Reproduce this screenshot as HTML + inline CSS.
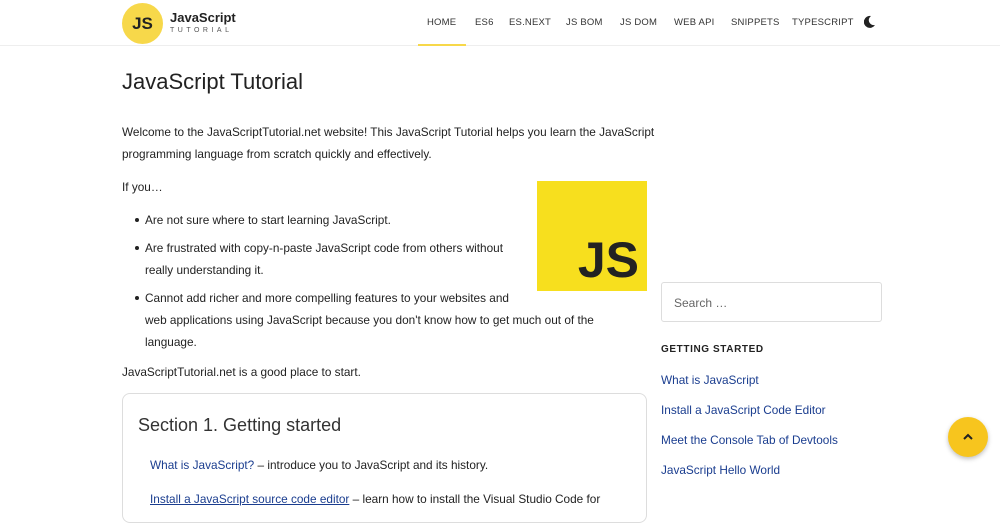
<!DOCTYPE html>
<html><head><meta charset="utf-8"><style>
*{margin:0;padding:0;box-sizing:border-box}
body{width:1000px;height:500px;overflow:hidden;background:#fff;font-family:"Liberation Sans",sans-serif;color:#222;position:relative}
.hdr{position:absolute;left:0;top:0;width:1000px;height:46px;border-bottom:1px solid #eee}
.logo{position:absolute;left:122px;top:3px;width:41px;height:41px;border-radius:50%;background:#f7d84a;font-weight:bold;font-size:17px;line-height:41px;text-align:center;color:#222}
.lt{position:absolute;left:170px;top:10px;font-weight:bold;font-size:13px;color:#222}
.ls{position:absolute;left:170px;top:27px;font-size:7px;letter-spacing:3.5px;color:#555}
.nav{position:absolute;top:17px;font-size:9.5px;color:#333;letter-spacing:.2px}
.ul{position:absolute;left:418px;top:44px;width:48px;height:2px;background:#f7d84a}
h1{position:absolute;left:122px;top:69px;font-weight:normal;font-size:22px;color:#222}
p,li{font-size:11.8px;line-height:22px;color:#222;white-space:nowrap}
.a{position:absolute;left:122px}
ul{position:absolute;left:145px;list-style:none}
li{position:relative;margin-bottom:6px}
li:before{content:"";position:absolute;left:-10px;top:9px;width:4px;height:4px;border-radius:50%;background:#222}
.js{position:absolute;left:537px;top:181px;width:110px;height:110px;background:#f7df1e}
.js span{position:absolute;right:8px;bottom:2px;font-weight:bold;font-size:50px;color:#222}
.card{position:absolute;left:122px;top:393px;width:525px;height:130px;border:1px solid #ddd;border-radius:8px}
.card h2{position:absolute;left:15px;top:21px;font-weight:normal;font-size:18px;color:#333}
.card p{position:absolute;left:27px}
.lk{color:#1a3d8f}
.srch{position:absolute;left:661px;top:282px;width:221px;height:40px;border:1px solid #ddd;border-radius:3px;font-size:12px;color:#666;padding:13px 12px}
.gs{position:absolute;left:661px;top:344px;font-weight:bold;font-size:10px;letter-spacing:.6px}
.sl{position:absolute;left:661px;font-size:11.8px;color:#1a3d8f}
.up{position:absolute;left:948px;top:417px;width:40px;height:40px;border-radius:50%;background:#f7c51e;box-shadow:0 2px 5px rgba(0,0,0,.25)}
</style></head><body>
<div class="hdr"></div>
<div class="logo">JS</div><div class="lt">JavaScript</div><div class="ls">TUTORIAL</div>
<span class="nav" style="left:427px">HOME</span><span class="nav" style="left:475px">ES6</span><span class="nav" style="left:509px">ES.NEXT</span><span class="nav" style="left:566px">JS BOM</span><span class="nav" style="left:620px">JS DOM</span><span class="nav" style="left:674px">WEB API</span><span class="nav" style="left:731px">SNIPPETS</span><span class="nav" style="left:792px">TYPESCRIPT</span>
<svg style="position:absolute;left:864px;top:15px" width="12" height="13" viewBox="0 0 12 13"><path d="M7 1A6 6 0 1 0 11 10A5 5 0 0 1 7 1Z" fill="#222"/></svg>
<div class="ul"></div>
<h1>JavaScript Tutorial</h1>
<p class="a" style="top:121px">Welcome to the JavaScriptTutorial.net website! This JavaScript Tutorial helps you learn the JavaScript<br>programming language from scratch quickly and effectively.</p>
<p class="a" style="top:176px">If you…</p>
<ul style="top:209px">
<li>Are not sure where to start learning JavaScript.</li>
<li>Are frustrated with copy-n-paste JavaScript code from others without<br>really understanding it.</li>
<li>Cannot add richer and more compelling features to your websites and<br>web applications using JavaScript because you don't know how to get much out of the<br>language.</li>
</ul>
<div class="js"><span>JS</span></div>
<p class="a" style="top:361px">JavaScriptTutorial.net is a good place to start.</p>
<div class="card"><h2>Section 1. Getting started</h2>
<p style="top:60px"><span class="lk">What is JavaScript?</span> – introduce you to JavaScript and its history.</p>
<p style="top:94px"><span class="lk" style="text-decoration:underline">Install a JavaScript source code editor</span> – learn how to install the Visual Studio Code for</p></div>
<div class="srch">Search …</div>
<div class="gs">GETTING STARTED</div>
<div class="sl" style="top:373px">What is JavaScript</div>
<div class="sl" style="top:403px">Install a JavaScript Code Editor</div>
<div class="sl" style="top:433px">Meet the Console Tab of Devtools</div>
<div class="sl" style="top:463px">JavaScript Hello World</div>
<div class="up"><svg style="position:absolute;left:15px;top:16px" width="10" height="7" viewBox="0 0 10 7"><path d="M1 6L5 2L9 6" stroke="#222" stroke-width="2" fill="none"/></svg></div>
</body></html>
